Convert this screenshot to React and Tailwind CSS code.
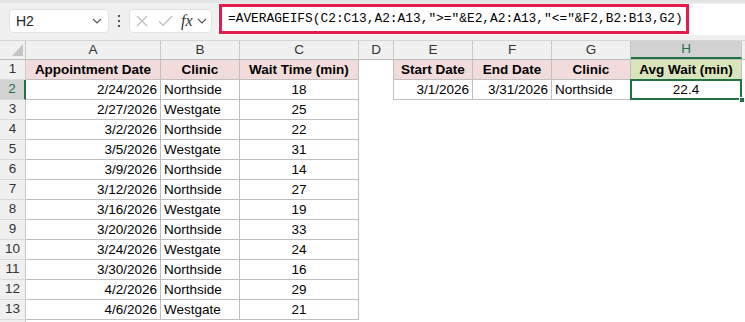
import React from "react";

const rows = [
  ["2/24/2026", "Northside", 18],
  ["2/27/2026", "Westgate", 25],
  ["3/2/2026", "Northside", 22],
  ["3/5/2026", "Westgate", 31],
  ["3/9/2026", "Northside", 14],
  ["3/12/2026", "Northside", 27],
  ["3/16/2026", "Westgate", 19],
  ["3/20/2026", "Northside", 33],
  ["3/24/2026", "Westgate", 24],
  ["3/30/2026", "Northside", 16],
  ["4/2/2026", "Northside", 29],
  ["4/6/2026", "Westgate", 21],
];

const cols = [
  { key: "A", w: "w-[135px]" },
  { key: "B", w: "w-[79px]" },
  { key: "C", w: "w-[119px]" },
  { key: "D", w: "w-[35px]" },
  { key: "E", w: "w-[79px]" },
  { key: "F", w: "w-[79px]" },
  { key: "G", w: "w-[79px]" },
  { key: "H", w: "w-[111px]" },
];

function Chevron({ className }) {
  return (
    <svg className={className} width="10" height="6" viewBox="0 0 10 6" fill="none">
      <path d="M1 1l4 4 4-4" stroke="#555" strokeWidth="1.1" />
    </svg>
  );
}

function Toolbar() {
  return (
    <div className="flex h-[41px] items-start border-t-[3px] border-b border-t-[#e4e4e4] border-b-[#d6d6d6] bg-[#f0f0f0]">
      <div className="ml-[9px] mt-[6px] flex h-[24px] w-[100px] items-center justify-between rounded-[4px] border border-[#e2e2e2] bg-white pl-[6px] pr-[6px]">
        <span className="text-[14px] text-[#222]">H2</span>
        <Chevron />
      </div>
      <div className="ml-[9px] mt-[12px] flex flex-col gap-[3px]">
        <span className="block h-[2px] w-[2px] bg-[#555]" />
        <span className="block h-[2px] w-[2px] bg-[#555]" />
        <span className="block h-[2px] w-[2px] bg-[#555]" />
      </div>
      <div className="ml-[9px] mt-[6px] flex h-[24px] w-[83px] items-center rounded-[4px] border border-[#e2e2e2] bg-white">
        <svg className="ml-[6px]" width="12" height="12" viewBox="0 0 12 12">
          <path d="M1 1l10 10M11 1L1 11" stroke="#bdbdbd" strokeWidth="1.2" />
        </svg>
        <svg className="ml-[10px]" width="15" height="12" viewBox="0 0 15 12">
          <path d="M1 6.5l4 4L14 1" fill="none" stroke="#bdbdbd" strokeWidth="1.2" />
        </svg>
        <span className="ml-[8px] font-['Liberation_Serif',serif] text-[16px] italic leading-none text-[#333]">fx</span>
        <Chevron className="ml-[4px]" />
      </div>
      <div className="ml-[6px] mt-[1px] flex h-[31px] flex-1 items-start rounded-l-[4px] bg-white">
        <div className="ml-[1px] flex h-[30px] w-[470px] items-center border-[3px] border-[#e31c4c] pl-[6px]">
          <span className="whitespace-nowrap font-['Liberation_Mono',monospace] text-[12.85px] text-black">
            =AVERAGEIFS(C2:C13,A2:A13,"&gt;="&amp;E2,A2:A13,"&lt;="&amp;F2,B2:B13,G2)
          </span>
        </div>
      </div>
    </div>
  );
}

function ColumnHeaders() {
  return (
    <div className="flex h-[19px] border-b border-[#bdbdbd] bg-[#f0f0f0] text-[13.5px] text-[#333]">
      <div className="flex w-[26px] shrink-0 items-end justify-end border-r border-[#c8c8c8] pb-[3px] pr-[2px]">
        <svg width="11" height="12" viewBox="0 0 11 12">
          <path d="M11 0V12H0Z" fill="#c4c4c4" />
        </svg>
      </div>
      {cols.map((c) =>
        c.key === "H" ? (
          <div
            key={c.key}
            className={`${c.w} flex shrink-0 items-center justify-center border-r border-b-2 border-r-[#c8c8c8] border-b-[#217346] bg-[#d2d2d2] text-[#217346]`}
          >
            H
          </div>
        ) : (
          <div key={c.key} className={`${c.w} flex shrink-0 items-center justify-center border-r border-[#c8c8c8]`}>
            {c.key}
          </div>
        )
      )}
      <div className="flex-1" />
    </div>
  );
}

function RowHeader({ n, active }) {
  return (
    <div
      className={`flex w-[26px] shrink-0 items-center justify-center border-b border-b-[#dadada] text-[13.5px] ${
        active ? "border-r-2 border-r-[#217346] bg-[#d2d2d2] text-[#217346]" : "border-r border-r-[#c8c8c8] bg-[#f0f0f0] text-[#333]"
      }`}
    >
      {n}
    </div>
  );
}

const box = "shrink-0 border-r border-b border-[#bfbfbf] px-[3px] leading-[19px]";

function App() {
  return (
    <div className="h-[322px] w-[745px] overflow-hidden bg-white font-['Liberation_Sans',Arial,sans-serif]">
      <Toolbar />
      <ColumnHeaders />

      <div className="text-[13.5px] text-black">
        <div className="flex h-[20px]">
          <RowHeader n={1} />
          <div className={`${box} w-[135px] bg-[#f2dcdb] text-center font-bold`}>Appointment Date</div>
          <div className={`${box} w-[79px] bg-[#f2dcdb] text-center font-bold`}>Clinic</div>
          <div className={`${box} w-[119px] bg-[#f2dcdb] text-center font-bold`}>Wait Time (min)</div>
          <div className="w-[35px] shrink-0 border-r border-[#bfbfbf]" />
          <div className={`${box} w-[79px] bg-[#f2dcdb] text-center font-bold`}>Start Date</div>
          <div className={`${box} w-[79px] bg-[#f2dcdb] text-center font-bold`}>End Date</div>
          <div className={`${box} w-[79px] bg-[#f2dcdb] text-center font-bold`}>Clinic</div>
          <div className={`${box} w-[111px] bg-[#d8e4bc] text-center font-bold`}>Avg Wait (min)</div>
        </div>

        {rows.map(([date, clinic, wait], index) => {
          const rowNumber = index + 2;
          return (
            <div key={rowNumber} className="flex h-[20px]">
              <RowHeader n={rowNumber} active={rowNumber === 2} />
              <div className={`${box} w-[135px] text-right`}>{date}</div>
              <div className={`${box} w-[79px]`}>{clinic}</div>
              <div className={`${box} w-[119px] text-center`}>{wait}</div>
              {rowNumber === 2 ? (
                <>
                  <div className="w-[35px] shrink-0 border-r border-[#bfbfbf]" />
                  <div className={`${box} w-[79px] text-right`}>3/1/2026</div>
                  <div className={`${box} w-[79px] text-right`}>3/31/2026</div>
                  <div className={`${box} w-[79px]`}>Northside</div>
                  <div className={`${box} relative w-[111px] text-center`}>
                    22.4
                    <div className="absolute -top-[1px] -left-[1px] h-[21px] w-[112px] border-2 border-[#217346]" />
                    <div className="absolute -right-[4px] -bottom-[4px] h-[6px] w-[6px] border border-white bg-[#217346]" />
                  </div>
                </>
              ) : null}
            </div>
          );
        })}

        <div className="flex h-[20px]">
          <div className="w-[26px] shrink-0 border-r border-[#c8c8c8] bg-[#f0f0f0]" />
        </div>
      </div>
    </div>
  );
}

export default App;
